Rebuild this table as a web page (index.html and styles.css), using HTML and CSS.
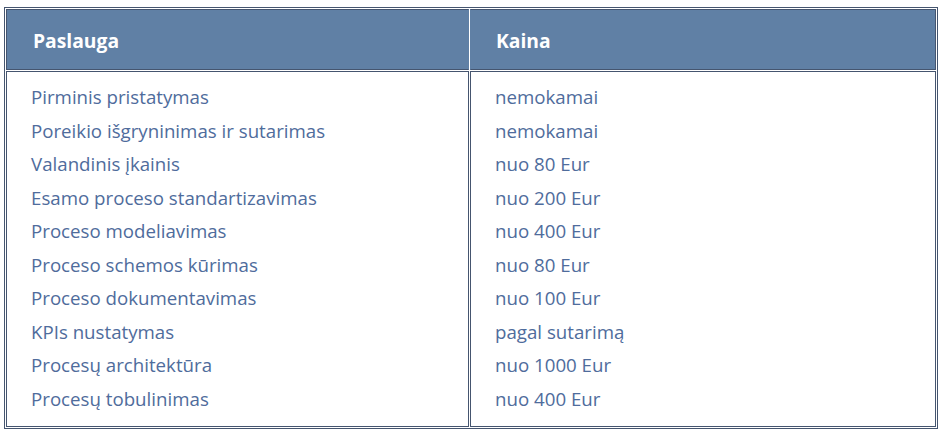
FILE: index.html
```html
<!DOCTYPE html>
<html lang="lt">
<head>
<meta charset="utf-8">
<title>Paslaugos</title>
<link rel="stylesheet" href="styles.css">
</head>
<body>
<div class="page">
  <table class="price-table">
    <thead>
      <tr>
        <th class="col-service">Paslauga</th>
        <th class="col-price">Kaina</th>
      </tr>
    </thead>
    <tbody>
      <tr>
        <td class="col-service">
          <div class="line">Pirminis pristatymas</div>
          <div class="line">Poreikio išgryninimas ir sutarimas</div>
          <div class="line">Valandinis įkainis</div>
          <div class="line">Esamo proceso standartizavimas</div>
          <div class="line">Proceso modeliavimas</div>
          <div class="line">Proceso schemos kūrimas</div>
          <div class="line">Proceso dokumentavimas</div>
          <div class="line">KPIs nustatymas</div>
          <div class="line">Procesų architektūra</div>
          <div class="line">Procesų tobulinimas</div>
        </td>
        <td class="col-price">
          <div class="line">nemokamai</div>
          <div class="line">nemokamai</div>
          <div class="line">nuo 80 Eur</div>
          <div class="line">nuo 200 Eur</div>
          <div class="line">nuo 400 Eur</div>
          <div class="line">nuo 80 Eur</div>
          <div class="line">nuo 100 Eur</div>
          <div class="line">pagal sutarimą</div>
          <div class="line">nuo 1000 Eur</div>
          <div class="line">nuo 400 Eur</div>
        </td>
      </tr>
    </tbody>
  </table>
</div>
</body>
</html>
```

FILE: styles.css
```css
html, body {
  margin: 0;
  padding: 0;
  background: #ffffff;
}

.page {
  padding: 7px 0 0 4px;
}

.price-table {
  border-collapse: separate;
  border-spacing: 1px;
  border: 1px solid #45556f;
  width: 934px;
  table-layout: fixed;
  font-family: "Open Sans", Lato, sans-serif;
  font-size: 18.7px;
}

.price-table th,
.price-table td {
  box-sizing: border-box;
  vertical-align: top;
  text-align: left;
}

.price-table th {
  background: #6080a5;
  color: #ffffff;
  font-weight: bold;
  font-size: 19.3px;
  height: 61px;
  padding: 2px 0 0 26px;
  vertical-align: middle;
  border: 1px solid #45556f;
  line-height: 24px;
}

.price-table th.col-service {
  width: 463px;
  border-right-color: #6080a5;
}

.price-table th.col-price {
  border-left-color: #6080a5;
  padding-left: 25px;
}

.price-table td {
  border: 1px solid #45556f;
  height: 356px;
  padding: 8px 0 0 24px;
  color: #4f6c9c;
}

.line {
  height: 33.5px;
  line-height: 33.5px;
  white-space: nowrap;
}
```
